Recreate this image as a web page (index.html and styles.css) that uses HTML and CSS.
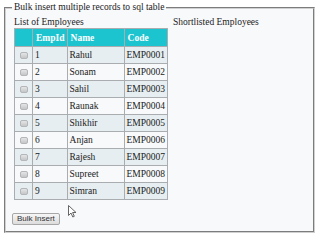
FILE: index.html
```html
<!DOCTYPE html>
<html lang="en">
<head>
    <meta charset="UTF-8">
    <title>Bulk insert multiple records to sql table</title>
    <link rel="stylesheet" href="styles.css">
</head>
<body>
    <fieldset class="bulk-box">
        <legend>Bulk insert multiple records to sql table</legend>
        <div class="lists">
            <div class="employee-list">
                <div class="list-title">List of Employees</div>
                <table class="emp-table">
                    <tr>
                        <th class="col-check"></th>
                        <th class="col-id">EmpId</th>
                        <th class="col-name">Name</th>
                        <th class="col-code">Code</th>
                    </tr>
                    <tr><td><input type="checkbox"></td><td>1</td><td>Rahul</td><td>EMP0001</td></tr>
                    <tr><td><input type="checkbox"></td><td>2</td><td>Sonam</td><td>EMP0002</td></tr>
                    <tr><td><input type="checkbox"></td><td>3</td><td>Sahil</td><td>EMP0003</td></tr>
                    <tr><td><input type="checkbox"></td><td>4</td><td>Raunak</td><td>EMP0004</td></tr>
                    <tr><td><input type="checkbox"></td><td>5</td><td>Shikhir</td><td>EMP0005</td></tr>
                    <tr><td><input type="checkbox"></td><td>6</td><td>Anjan</td><td>EMP0006</td></tr>
                    <tr><td><input type="checkbox"></td><td>7</td><td>Rajesh</td><td>EMP0007</td></tr>
                    <tr><td><input type="checkbox"></td><td>8</td><td>Supreet</td><td>EMP0008</td></tr>
                    <tr><td><input type="checkbox"></td><td>9</td><td>Simran</td><td>EMP0009</td></tr>
                </table>
            </div>
            <div class="shortlist">
                <div class="list-title">Shortlisted Employees</div>
            </div>
        </div>
        <div class="actions">
            <button class="bulk-btn">Bulk Insert</button>
        </div>
    </fieldset>

    <svg class="cursor" width="9" height="13" viewBox="0 0 9 13">
        <path d="M0.5 0.5 L0.5 10.5 L3 8 L4.8 12 L6.3 11.3 L4.6 7.5 L8 7.5 Z" fill="#fff" stroke="#555" stroke-width="0.9" stroke-linejoin="round"/>
    </svg>
</body>
</html>
```

FILE: styles.css
```css
body {
    margin: 0;
    background: #fff;
    font-family: "Liberation Serif", "Times New Roman", serif;
    font-size: 9.5px;
    color: #222;
}
.bulk-box {
    margin: 2px 5px 0 4px;
    padding: 4px 6px 6px 6px;
    border: 2px groove #d0d0d0;
    background: #f8f9fb;
}
.bulk-box legend {
    padding: 0 2px;
    line-height: 11px;
    color: #222;
}
.lists {
    display: flex;
    padding-left: 2px;
}
.employee-list {
    width: 159px;
}
.list-title {
    line-height: 11px;
    height: 11px;
}
.emp-table {
    border-collapse: collapse;
}
.emp-table th, .emp-table td {
    border: 1px solid #a9adb0;
    padding: 0 2px;
    text-align: left;
    white-space: nowrap;
}
.emp-table th {
    background: #1cc4cf;
    color: #fff;
    font-weight: bold;
    height: 17px;
    padding-left: 3px;
}
.emp-table td {
    height: 16px;
}
.emp-table tr:nth-child(even) td {
    background: #e6eef1;
}
.emp-table tr:nth-child(odd) td {
    background: #f7f9fa;
}
.col-check { width: 12px; }
.col-id { width: 28px; }
.col-name { width: 51px; }
.col-code { width: 35px; }
.emp-table input {
    appearance: none;
    -webkit-appearance: none;
    display: block;
    width: 8px;
    height: 7px;
    margin: 0 0 0 3px;
    border: 1px solid #b4b6b8;
    border-radius: 2px;
    background: linear-gradient(#e4e5e6, #c4c6c8);
}
.actions {
    padding-top: 13px;
}
.bulk-btn {
    display: block;
    font-family: "Liberation Sans", Arial, sans-serif;
    font-size: 8px;
    color: #333;
    height: 12px;
    padding: 0 4px;
    line-height: 10px;
    border: 1px solid #a7a7a7;
    border-radius: 2px;
    background: linear-gradient(#f6f6f6, #dcdcdc);
}
.cursor {
    position: absolute;
    left: 68px;
    top: 205px;
}
```
